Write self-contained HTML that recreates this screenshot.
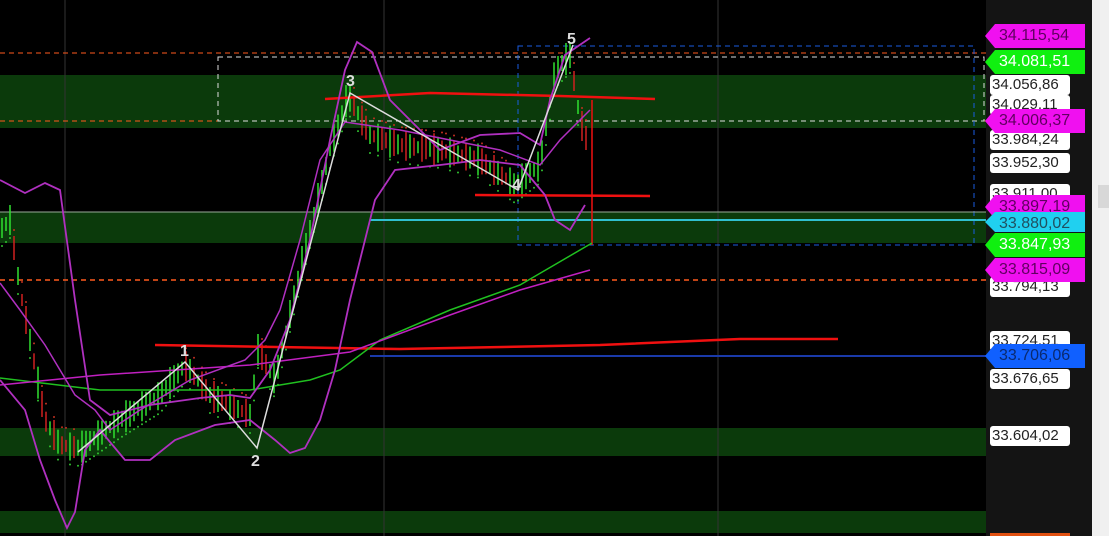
<!DOCTYPE html>
<html><head><style>
body{margin:0;width:1109px;height:536px;overflow:hidden;background:#000;font-family:"Liberation Sans",sans-serif}
.l{position:absolute;left:990px;width:78px;height:20px;background:#fff;border-radius:3px;font-size:15px;color:#222;line-height:20px;padding-left:2px}
.t{position:absolute;left:985px;width:100px;height:24px;font-size:16px;line-height:24px;padding-left:14px;box-sizing:border-box;clip-path:polygon(0 50%,10px 0,100% 0,100% 100%,10px 100%)}
</style></head><body>
<svg width="1109" height="536" style="position:absolute;left:0;top:0">
<rect x="0" y="0" width="986" height="536" fill="#000"/>
<rect x="986" y="0" width="106" height="536" fill="#141414"/>
<rect x="1092" y="0" width="17" height="536" fill="#f0f0f0"/>
<rect x="1098" y="185" width="11" height="23" fill="#d8d8d8"/>
<rect x="0" y="75" width="986" height="53" fill="#0b3a0b"/>
<rect x="0" y="212" width="986" height="31" fill="#0b3a0b"/>
<rect x="0" y="428" width="986" height="28" fill="#0b3a0b"/>
<rect x="0" y="511" width="986" height="22" fill="#0b3a0b"/>
<g stroke="#333" stroke-width="1"><line x1="65" y1="0" x2="65" y2="536"/><line x1="384" y1="0" x2="384" y2="536"/><line x1="718" y1="0" x2="718" y2="536"/></g>
<line x1="0" y1="53" x2="986" y2="53" stroke="#ff5a1e" stroke-dasharray="5,4"/>
<line x1="0" y1="121" x2="986" y2="121" stroke="#ff5a1e" stroke-dasharray="5,4"/>
<line x1="0" y1="280" x2="986" y2="280" stroke="#ff5a1e" stroke-dasharray="5,4" stroke-width="1.5"/>
<rect x="218" y="57" width="766" height="64" fill="none" stroke="#ddd" stroke-dasharray="5,4"/>
<rect x="518" y="46" width="456" height="199" fill="none" stroke="#1a5ce0" stroke-dasharray="5,4"/>
<line x1="0" y1="212" x2="986" y2="212" stroke="#9aaa9a"/>
<line x1="370" y1="220" x2="986" y2="220" stroke="#30c0d0" stroke-width="2"/>
<line x1="370" y1="356" x2="986" y2="356" stroke="#1a3aaa" stroke-width="2"/>
<g id="candles"></g>
<path d="M155 345 L400 349 L600 345 L740 339 L838 339" stroke="#f01010" stroke-width="2.5" fill="none"/>
<path d="M325 99 L430 93 L560 96 L655 99" stroke="#f01010" stroke-width="2.5" fill="none"/>
<path d="M475 195 L650 196" stroke="#f01010" stroke-width="2.5" fill="none"/>
<line x1="592" y1="100" x2="592" y2="245" stroke="#f01010" stroke-width="1.5"/>
<path d="M0 378 L100 390 L250 390 L280 385 L310 380 L340 370 L380 340 L450 310 L520 285 L592 243" stroke="#20c020" stroke-width="1.5" fill="none"/>
<path d="M0 385 L100 375 L250 365 L350 352 L450 315 L520 290 L590 270" stroke="#c020c0" stroke-width="1.5" fill="none"/>
<path d="M0 180 L25 193 L45 183 L60 190 L75 300 L90 400 L110 415 L150 405 L200 398 L230 395 L250 398 L270 370 L290 320 L310 240 L330 140 L345 70 L357 42 L372 52 L390 100 L420 130 L440 150 L480 135 L520 133 L540 145 L550 100 L565 55 L590 38" stroke="#b030c0" stroke-width="1.8" fill="none"/>
<path d="M0 380 L25 410 L40 460 L55 500 L67 528 L75 512 L85 450 L100 430 L125 460 L150 460 L175 440 L215 425 L250 420 L275 440 L290 453 L305 448 L320 420 L335 370 L350 300 L365 240 L375 200 L395 170 L440 165 L480 160 L520 165 L545 195 L555 220 L570 230 L585 205" stroke="#b030c0" stroke-width="1.8" fill="none"/>
<path d="M0 283 L20 310 L45 345 L60 370 L75 395 L95 410 L110 430 L140 410 L190 380 L245 360 L265 340 L280 310 L300 240 L320 160 L345 122 L400 130 L450 140 L500 150 L540 165 L560 140 L580 120 L590 110" stroke="#b030c0" stroke-width="1.5" fill="none"/>
<path d="M78 452 L185 362 L257 448 L350 93 L518 190 L573 45" stroke="#ddd" stroke-width="1.5" fill="none"/>
<g fill="#ddd" font-size="16" font-weight="bold"><text x="180" y="356">1</text><text x="251" y="466">2</text><text x="346" y="86">3</text><text x="512" y="190">4</text><text x="567" y="44">5</text></g>
</svg>
<script>
var pts=[[0,230],[10,220],[20,290],[30,340],[45,420],[60,445],[80,448],[120,420],[160,395],[185,365],[210,395],[250,415],[258,350],[275,380],[300,270],[330,150],[348,95],[370,135],[400,145],[440,150],[480,160],[515,185],[540,165],[555,70],[570,55],[580,120],[590,150]];
function yAt(x){for(var i=0;i<pts.length-1;i++){if(x>=pts[i][0]&&x<=pts[i+1][0]){var t=(x-pts[i][0])/(pts[i+1][0]-pts[i][0]);return pts[i][1]+t*(pts[i+1][1]-pts[i][1]);}}return 150;}
var s='';for(var x=2;x<590;x+=4){var y=yAt(x),y2=yAt(x+4),up=y2<y||(x*7%5<2);var h=6+(x*13%11);s+='<line x1="'+x+'" x2="'+x+'" y1="'+(y-h)+'" y2="'+(y+h)+'" stroke="'+(up?'#30e030':'#d02020')+'" stroke-width="1.5"/>';
var d=up?y+18:y-18;s+='<circle cx="'+x+'" cy="'+d+'" r="1" fill="'+(up?'#30c030':'#c03020')+'"/>';}
document.getElementById('candles').innerHTML=s;
</script>
<div class="l" style="top:75px">34.056,86</div>
<div class="l" style="top:95px">34.029,11</div>
<div class="l" style="top:130px">33.984,24</div>
<div class="l" style="top:153px">33.952,30</div>
<div class="l" style="top:184px">33.911,00</div>
<div class="l" style="top:277px">33.794,13</div>
<div class="l" style="top:331px">33.724,51</div>
<div class="l" style="top:369px">33.676,65</div>
<div class="l" style="top:426px">33.604,02</div>
<div class="t" style="top:24px;background:#f010f0;color:#600060">34.115,54</div>
<div class="t" style="top:50px;background:#10f010;color:#fff">34.081,51</div>
<div class="t" style="top:109px;background:#f010f0;color:#600060">34.006,37</div>
<div class="t" style="top:195px;background:#f010f0;color:#600060">33.897,19</div>
<div class="t" style="top:212px;height:20px;background:#20d0f0;color:#205060">33.880,02</div>
<div class="t" style="top:233px;background:#10f010;color:#fff">33.847,93</div>
<div class="t" style="top:258px;background:#f010f0;color:#600060">33.815,09</div>
<div class="t" style="top:344px;background:#1060ff;color:#0a2a70">33.706,06</div>
<div style="position:absolute;left:990px;top:533px;width:80px;height:3px;background:#e05010"></div>
</body></html>
